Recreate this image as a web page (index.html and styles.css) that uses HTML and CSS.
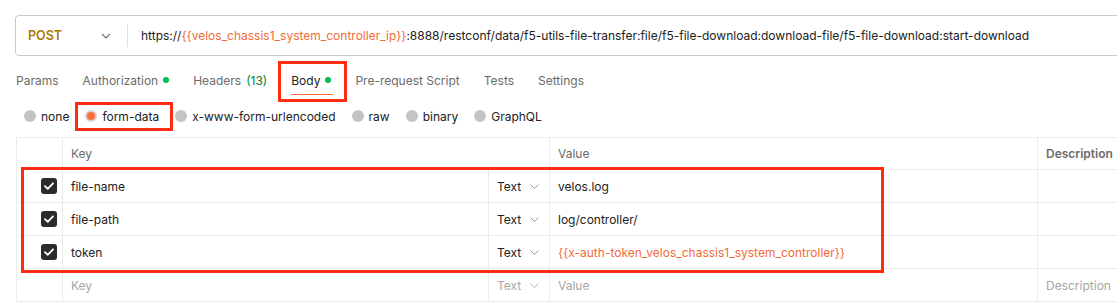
FILE: index.html
```html
<!DOCTYPE html>
<html>
<head>
<meta charset="utf-8">
<link rel="stylesheet" href="styles.css">
</head>
<body>
<div class="page">
  <div class="urlbar">
    <div class="method">
      <span class="method-name">POST</span>
      <svg class="chev" width="10" height="6" viewBox="0 0 10 6"><path d="M1 1l4 4 4-4" fill="none" stroke="#6b6b6b" stroke-width="1.1"/></svg>
    </div>
    <div class="sep"></div>
    <div class="url">https://<span class="var">{{velos_chassis1_system_controller_ip}}</span>:8888/restconf/data/f5-utils-file-transfer:file/f5-file-download:download-file/f5-file-download:start-download</div>
  </div>

  <div class="tabs">
    <span class="tab">Params</span>
    <span class="tab">Authorization <i class="dot"></i></span>
    <span class="tab">Headers <span class="count">(13)</span></span>
    <span class="tab active">Body <i class="dot"></i><span class="mark mark-body"></span></span>
    <span class="tab">Pre-request Script</span>
    <span class="tab">Tests</span>
    <span class="tab">Settings</span>
  </div>

  <div class="radios">
    <span class="radio"><i class="rb"></i>none</span>
    <span class="radio sel"><i class="rb"></i>form-data<span class="mark mark-form"></span></span>
    <span class="radio"><i class="rb"></i>x-www-form-urlencoded</span>
    <span class="radio"><i class="rb"></i>raw</span>
    <span class="radio"><i class="rb"></i>binary</span>
    <span class="radio"><i class="rb"></i>GraphQL</span>
  </div>

  <div class="table-wrap">
    <div class="grid">
      <div class="c h"></div>
      <div class="c h span2">Key</div>
      <div class="c h">Value</div>
      <div class="c h bold">Description</div>

      <div class="c chk"><span class="cb"><svg width="10" height="8" viewBox="0 0 10 8"><path d="M1 4.2l2.7 2.6L9 1.3" fill="none" stroke="#fff" stroke-width="1.8" stroke-linecap="round" stroke-linejoin="round"/></svg></span></div>
      <div class="c">file-name</div>
      <div class="c type">Text <svg class="tchev" width="9" height="5" viewBox="0 0 9 5"><path d="M.5.5l4 4 4-4" fill="none" stroke="#9a9a9a" stroke-width="1"/></svg></div>
      <div class="c">velos.log</div>
      <div class="c"></div>

      <div class="c chk"><span class="cb"><svg width="10" height="8" viewBox="0 0 10 8"><path d="M1 4.2l2.7 2.6L9 1.3" fill="none" stroke="#fff" stroke-width="1.8" stroke-linecap="round" stroke-linejoin="round"/></svg></span></div>
      <div class="c">file-path</div>
      <div class="c type">Text <svg class="tchev" width="9" height="5" viewBox="0 0 9 5"><path d="M.5.5l4 4 4-4" fill="none" stroke="#9a9a9a" stroke-width="1"/></svg></div>
      <div class="c">log/controller/</div>
      <div class="c"></div>

      <div class="c chk"><span class="cb"><svg width="10" height="8" viewBox="0 0 10 8"><path d="M1 4.2l2.7 2.6L9 1.3" fill="none" stroke="#fff" stroke-width="1.8" stroke-linecap="round" stroke-linejoin="round"/></svg></span></div>
      <div class="c">token</div>
      <div class="c type">Text <svg class="tchev" width="9" height="5" viewBox="0 0 9 5"><path d="M.5.5l4 4 4-4" fill="none" stroke="#9a9a9a" stroke-width="1"/></svg></div>
      <div class="c var">{{x-auth-token_velos_chassis1_system_controller}}</div>
      <div class="c"></div>

      <div class="c"></div>
      <div class="c ph">Key</div>
      <div class="c type ph">Text <svg class="tchev" width="9" height="5" viewBox="0 0 9 5"><path d="M.5.5l4 4 4-4" fill="none" stroke="#b5b5b5" stroke-width="1"/></svg></div>
      <div class="c ph">Value</div>
      <div class="c ph">Description</div>
    </div>
    <span class="mark mark-rows"></span>
  </div>
</div>
</body>
</html>
```
FILE: styles.css
```css
html, body {
  margin: 0;
  padding: 0;
  background: #fff;
  overflow: hidden;
}
body {
  font-family: "Inter", "Liberation Sans", sans-serif;
  font-size: 12px;
  color: #212121;
  width: 1117px;
  height: 303px;
}
.page {
  padding-top: 15px;
  padding-left: 15px;
}
.urlbar {
  display: flex;
  align-items: center;
  height: 39px;
  width: 1130px;
  border: 1px solid #c9c9c9;
  border-radius: 4px;
  box-sizing: content-box;
}
.method {
  display: flex;
  align-items: center;
  width: 111px;
  padding-left: 12px;
  box-sizing: border-box;
}
.method-name {
  color: #ad7a03;
  font-weight: 600;
  font-size: 12.5px;
  width: 73px;
}
.chev { display: block; }
.sep {
  width: 1px;
  height: 23px;
  background: #e0e0e0;
}
.url {
  padding-left: 13px;
  white-space: nowrap;
  color: #212121;
}
.var { color: #f26b3a; }

.tabs {
  display: flex;
  align-items: center;
  gap: 24px;
  height: 28px;
  margin-top: 10px;
  padding-left: 1px;
  color: #6b6b6b;
}
.tab {
  position: relative;
  display: flex;
  align-items: center;
  gap: 5px;
  height: 28px;
  white-space: nowrap;
}
.tab.active {
  color: #212121;
}
.tab.active::after {
  content: "";
  position: absolute;
  left: 0;
  right: -2px;
  bottom: -1px;
  height: 1px;
  background: #ff6c37;
}
.dot {
  display: inline-block;
  width: 6px;
  height: 6px;
  border-radius: 50%;
  background: #0cbb52;
}
.count { color: #007f31; }

.mark {
  position: absolute;
  border: 3px solid #ff2a0f;
  pointer-events: none;
}
.mark-body {
  left: -13px;
  right: -16px;
  top: -5px;
  bottom: -8px;
}

.radios {
  display: flex;
  align-items: center;
  gap: 16px;
  height: 26px;
  margin-top: 9px;
  padding-left: 9px;
  color: #212121;
}
.radio {
  position: relative;
  display: flex;
  align-items: center;
  gap: 5px;
  height: 16px;
  white-space: nowrap;
}
.rb {
  display: inline-block;
  width: 12px;
  height: 12px;
  border-radius: 50%;
  background: #c4c4c4;
  box-sizing: border-box;
}
.radio.sel .rb {
  background: #ff6c37;
  border: 2.5px solid #d4d4d4;
}
.mark-form {
  left: -10px;
  right: -14px;
  top: -6px;
  bottom: -7px;
}

.table-wrap {
  position: relative;
  margin-top: 8px;
  margin-left: 1px;
}
.grid {
  display: grid;
  grid-template-columns: 46px 426px 61px 488px 120px;
  grid-template-rows: 32px 33px 33px 33px 33px;
  border-top: 1px solid #ebebeb;
  border-left: 1px solid #ebebeb;
}
.c {
  display: flex;
  align-items: center;
  padding-left: 8px;
  border-right: 1px solid #ebebeb;
  border-bottom: 1px solid #ebebeb;
  white-space: nowrap;
  overflow: hidden;
}
.h { color: #6b6b6b; }
.span2 { grid-column: span 2; }
.bold { font-weight: 600; }
.chk {
  justify-content: flex-end;
  padding-left: 0;
  padding-right: 5px;
}
.cb {
  display: flex;
  align-items: center;
  justify-content: center;
  width: 16px;
  height: 16px;
  border-radius: 3px;
  background: #2b2b2b;
}
.type {
  gap: 9px;
  color: #212121;
}
.tchev { display: block; }
.ph { color: #a6a6a6; }
.mark-rows {
  left: 5px;
  top: 30px;
  width: 857px;
  height: 100px;
}
```
